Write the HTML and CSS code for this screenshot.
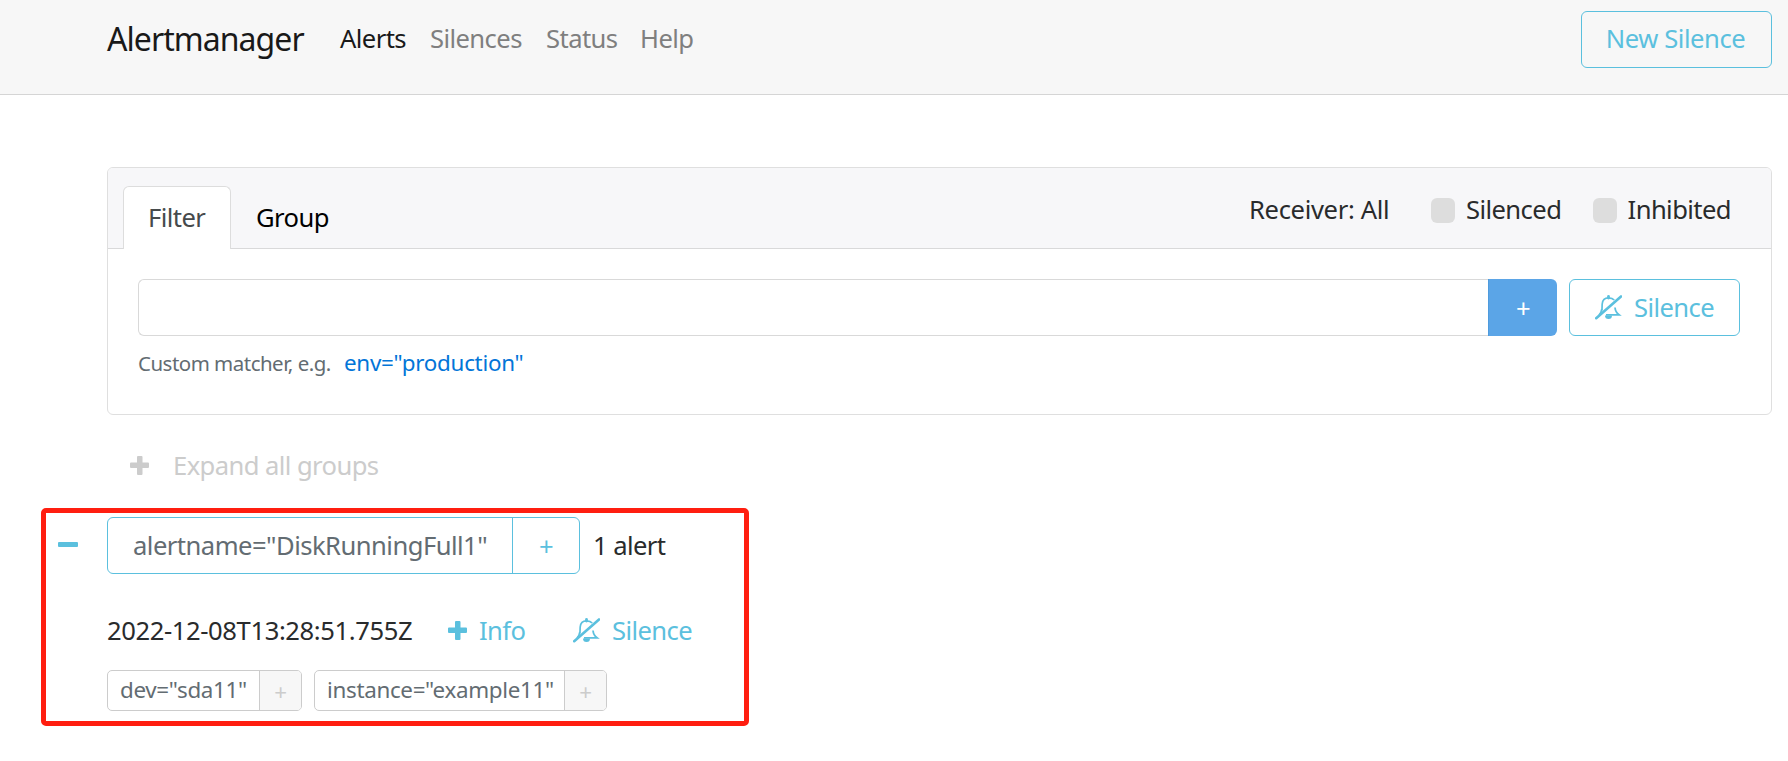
FILE: index.html
```
<!DOCTYPE html>
<html lang="en">
<head>
    <meta charset="UTF-8">
    <meta name="viewport" content="width=device-width, initial-scale=1.0">
    <title>Alertmanager</title>
    <link rel="stylesheet" href="styles.css">
</head>
<body>

<!-- bell with a slash, shared by the silence buttons -->
<svg class="sprite" width="0" height="0">
    <symbol id="bell-slash" viewBox="0 0 27 25">
        <path d="M6.800 15.500C7.200 13 7 11.500 7.200 9C7.500 5 10 2.800 13.500 2.800C16 2.800 18 3.500 19.200 5" fill="none" stroke="currentColor" stroke-width="1.700"/>
        <path d="M13.500 3V1.500" fill="none" stroke="currentColor" stroke-width="2.800" stroke-linecap="round"/>
        <path d="M20 12.500C20.300 16 21.500 18 24 19.800H11" fill="none" stroke="currentColor" stroke-width="1.800"/>
        <path d="M10 20.500h7a3.500 3.500 0 0 1-7 0z" fill="currentColor"/>
        <path d="M6.800 14C6.400 17 5.500 18.500 4 20" fill="none" stroke="currentColor" stroke-width="1.700"/>
        <path d="M1.200 23.200L26 1.500" stroke="currentColor" stroke-width="2.600" stroke-linecap="round"/>
    </symbol>
    <symbol id="plus" viewBox="0 0 19 19">
        <path d="M8 0h3.500q1 0 1 1v5.500h5.500q1 0 1 1v3.500q0 1-1 1h-5.500v6q0 1-1 1h-3.500q-1 0-1-1v-6h-6q-1 0-1-1v-3.500q0-1 1-1h6v-5.500q0-1 1-1z" fill="currentColor"/>
    </symbol>
</svg>

<header class="navbar">
    <a class="brand">Alertmanager</a>
    <nav class="nav">
        <a class="nav-link nav-alerts active">Alerts</a>
        <a class="nav-link nav-silences">Silences</a>
        <a class="nav-link nav-status">Status</a>
        <a class="nav-link">Help</a>
    </nav>
    <button class="btn btn-new">New Silence</button>
</header>

<main class="container">
    <section class="card">
        <div class="card-header">
            <a class="tab active">Filter</a>
            <a class="tab tab-group">Group</a>
            <div class="options">
                <span class="receiver">Receiver: All</span>
                <label class="check check-silenced"><i class="box"></i><span>Silenced</span></label>
                <label class="check check-inhibited"><i class="box"></i><span>Inhibited</span></label>
            </div>
        </div>
        <div class="card-body">
            <div class="filter-row">
                <input class="filter-input" type="text">
                <button class="btn-add">+</button>
                <button class="btn btn-silence"><svg class="bell"><use href="#bell-slash"/></svg><span>Silence</span></button>
            </div>
            <div class="hint">
                <span class="hint-text">Custom matcher, e.g.</span>
                <a class="hint-link">env="production"</a>
            </div>
        </div>
    </section>

    <div class="expand"><svg class="plus"><use href="#plus"/></svg><span>Expand all groups</span></div>

    <section class="group">
        <div class="group-head">
            <i class="minus"></i>
            <div class="matcher">
                <span class="matcher-name">alertname="DiskRunningFull1"</span>
                <span class="matcher-add">+</span>
            </div>
            <span class="count">1 alert</span>
        </div>
        <div class="alert-row">
            <span class="time">2022-12-08T13:28:51.755Z</span>
            <a class="link link-info"><svg class="plus"><use href="#plus"/></svg><span>Info</span></a>
            <a class="link"><svg class="bell"><use href="#bell-slash"/></svg><span>Silence</span></a>
        </div>
        <div class="labels">
            <div class="label label-dev"><span class="label-text">dev="sda11"</span><span class="label-add">+</span></div>
            <div class="label label-instance"><span class="label-text">instance="example11"</span><span class="label-add">+</span></div>
        </div>
    </section>
</main>

</body>
</html>
```
FILE: styles.css
```
* {
    box-sizing: border-box;
}
body {
    margin: 0;
    font-family: "Noto Sans", "Open Sans", sans-serif;
    font-size: 25.6px;
    line-height: 38px;
    letter-spacing: -0.58px;
    color: #292b2c;
    background-color: #fff;
    white-space: nowrap;
}
button, input {
    font: inherit;
    letter-spacing: inherit;
    padding: 0;
    margin: 0;
}
.sprite {
    position: absolute;
}
.navbar {
    display: flex;
    align-items: flex-start;
    height: 95px;
    padding: 11px 16px 0 107px;
    background-color: #f7f7f7;
    border-bottom: 1px solid #d5d5d5;
}
.brand {
    width: 233px;
    font-size: 32px;
    line-height: 55px;
    letter-spacing: -0.95px;
    color: #191919;
}
.nav {
    display: flex;
    line-height: 56px;
}
.nav-link {
    color: #7f7f7f;
}
.nav-link.active {
    color: #191919;
}
.nav-alerts {
    width: 90px;
}
.nav-silences {
    width: 116px;
}
.nav-status {
    width: 94px;
}
.btn {
    height: 57px;
    color: #5bc0de;
    background-color: transparent;
    border: 1px solid #5bc0de;
    border-radius: 6px;
}
.btn-new {
    width: 191px;
    margin-left: auto;
    padding: 0 2px 1px 0;
    letter-spacing: -0.45px;
}
.container {
    padding: 72px 16px 0 41px;
}
.card {
    height: 248px;
    margin-left: 66px;
    border: 1px solid #dfdfdf;
    border-radius: 6px;
}
.card-header {
    display: flex;
    height: 81px;
    padding: 18px 40px 0 15px;
    background-color: #f7f7f9;
    border-bottom: 1px solid #d9d9da;
    border-radius: 5px 5px 0 0;
}
.tab {
    height: 63px;
    line-height: 63px;
    color: #000;
}
.tab.active {
    width: 108px;
    padding-left: 24px;
    line-height: 61px;
    color: #464a4c;
    background-color: #fff;
    border: 1px solid #ddd;
    border-bottom: 0;
    border-radius: 6px 6px 0 0;
}
.tab-group {
    padding-left: 25px;
}
.options {
    display: flex;
    margin-left: auto;
    line-height: 47px;
}
.receiver {
    width: 182px;
    letter-spacing: -0.35px;
}
.check {
    display: flex;
}
.check-silenced {
    width: 162px;
}
.check-inhibited {
    width: 138px;
}
.box {
    width: 24px;
    height: 25px;
    margin: 12px 11px 0 0;
    background-color: #ddd;
    border-radius: 6px;
}
.card-body {
    padding: 30px 31px 0 30px;
}
.filter-row {
    display: flex;
}
.filter-input {
    width: 1350px;
    height: 57px;
    border: 1px solid #d9d9d9;
    border-right: 0;
    border-radius: 6px 0 0 6px;
}
.btn-add {
    width: 69px;
    height: 57px;
    padding-top: 2px;
    color: #fff;
    background-color: #5ba5e7;
    border: 0;
    border-left: 1px solid #4f9bdd;
    border-radius: 0 6px 6px 0;
}
.btn-add, .matcher-add {
    font-size: 25.6px;
}
.btn-silence {
    display: flex;
    align-items: center;
    width: 171px;
    margin-left: auto;
    padding-left: 25px;
}
.bell {
    flex: none;
    width: 27px;
    height: 25px;
    margin-right: 12px;
}
.hint {
    display: flex;
    align-items: baseline;
    margin-top: 8px;
}
.hint-text {
    width: 206px;
    font-size: 20.48px;
    letter-spacing: -0.5px;
    color: #636c72;
}
.hint-link {
    font-size: 22.4px;
    letter-spacing: -0.27px;
    color: #0275d8;
}
.expand {
    display: flex;
    align-items: center;
    height: 93px;
    padding: 8px 0 0 89px;
    color: #ccc;
}
.plus {
    flex: none;
    width: 19px;
    height: 19px;
}
.expand .plus {
    margin-right: 24px;
}
.group {
    width: 708px;
    height: 218px;
    padding: 4px 0 0 12px;
    border: 5px solid #ff1e10;
    border-radius: 5px;
}
.group-head {
    display: flex;
    align-items: center;
}
.minus {
    width: 20px;
    height: 5px;
    margin: 0 29px 3px 0;
    background-color: #5bc0de;
    border-radius: 1px;
}
.matcher {
    display: flex;
    width: 473px;
    height: 57px;
    margin-right: 13px;
    line-height: 55px;
    border: 1px solid #5bc0de;
    border-radius: 6px;
}
.matcher-name {
    width: 405px;
    padding-left: 25px;
    color: #636c72;
    letter-spacing: -0.53px;
    border-right: 1px solid #5bc0de;
}
.matcher-add {
    flex: 1;
    line-height: 58px;
    text-align: center;
    color: #5bc0de;
}
.alert-row {
    display: flex;
    height: 57px;
    margin: 28px 0 0 49px;
    line-height: 57px;
}
.time {
    width: 341px;
    letter-spacing: -0.4px;
}
.link {
    display: flex;
    align-items: center;
    color: #5bc0de;
}
.link-info {
    width: 125px;
}
.link-info .plus {
    margin-right: 12px;
}
.labels {
    display: flex;
    gap: 12px;
    margin: 11px 0 0 49px;
    font-size: 22.4px;
    line-height: 38px;
    letter-spacing: -0.32px;
}
.label {
    display: flex;
    height: 41px;
    border: 1px solid #ccc;
    border-radius: 5px;
}
.label-dev {
    width: 195px;
}
.label-instance {
    width: 293px;
}
.label-text {
    flex: 1;
    padding-left: 12px;
    color: #636c72;
}
.label-add {
    width: 42px;
    line-height: 41px;
    text-align: center;
    color: #ccc;
    background-color: #f7f7f7;
    border-left: 1px solid #ccc;
    border-radius: 0 4px 4px 0;
}
.label-add {
    height: 39px;
}
```
